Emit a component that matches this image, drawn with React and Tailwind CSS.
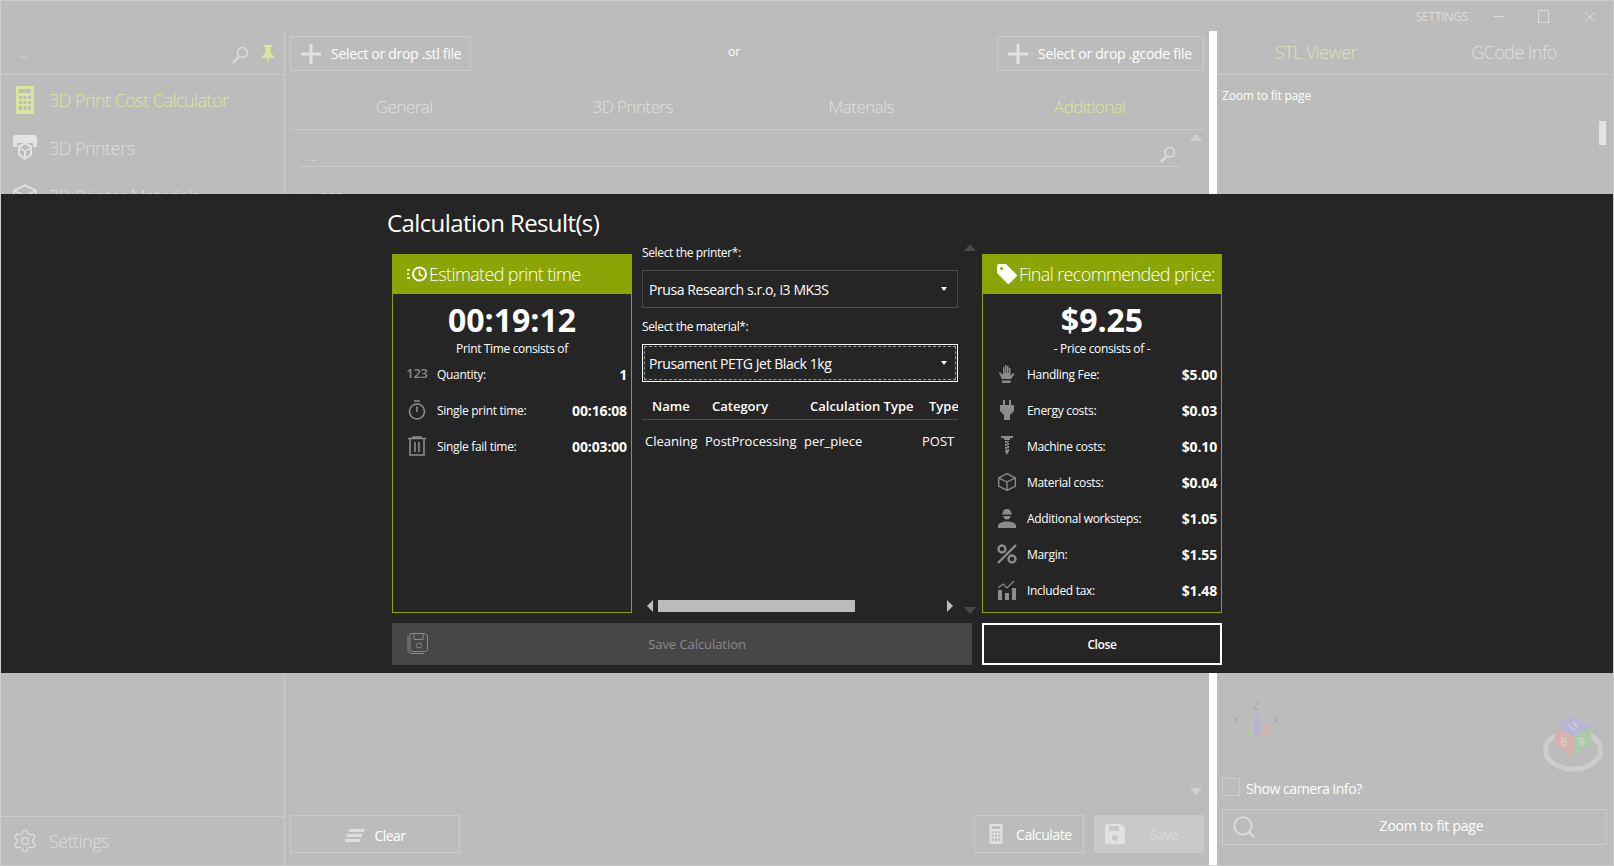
import React from "react";
import { Search, Settings } from "lucide-react";

const font = "font-['Open_Sans','Noto_Sans',sans-serif]";

const Up = ({ className }) => (
  <svg width="12" height="7" viewBox="0 0 12 7" className={className}>
    <path d="M0 7 6 0l6 7z" fill="currentColor" />
  </svg>
);

const CalcIcon = ({ size = 22, color = "#dde59a", height = 28 }) => (
  <svg width={size} height={height} viewBox="0 0 18 28">
    <path
      fillRule="evenodd"
      fill={color}
      d="M1 0h16a1 1 0 0 1 1 1v26a1 1 0 0 1-1 1H1a1 1 0 0 1-1-1V1a1 1 0 0 1 1-1zm2 3v4h12V3zm0 7v3h3v-3zm4.500 0v3h3v-3zm4.500 0v3h3v-3zM3 15v3h3v-3zm4.500 0v3h3v-3zm4.500 0v3h3v-3zM3 20v4h3v-4zm4.500 0v4h3v-4zm4.500 0v4h3v-4z"
    />
  </svg>
);

const PrinterIcon = () => (
  <svg width="26" height="26" viewBox="0 0 26 26" fill="#e4e4e4">
    <path d="M4 0h18a3 3 0 0 1 3 3v9h-4V8H5v4H1V3a3 3 0 0 1 3-3z" />
    <path d="M13 7l7 4v9l-7 5-7-5v-9z" />
    <path d="M13 9.500l5 3-5 3-5-3zM8 14l4 2.500V22l-4-3zM18 14l-4 2.500V22l4-3z" fill="#bcbcbc" />
  </svg>
);

const BoxIcon = ({ color, size = 24 }) => (
  <svg width={size} height={size} viewBox="0 0 24 24" fill="none" stroke={color} strokeWidth="1.600" strokeLinejoin="round">
    <path d="M12 2 22 7v10l-10 5-10-5V7z" />
    <path d="M2 7l10 5 10-5M12 12v10" />
  </svg>
);

const SearchFlip = ({ size = 18, color = "#dcdcdc" }) => (
  <svg width={size} height={size} viewBox="0 0 18 18" fill="none" stroke={color}>
    <circle cx="11.500" cy="6.500" r="5" strokeWidth="1.600" />
    <path d="M8 10.500 2 17" strokeWidth="2.400" />
  </svg>
);

const PlusIcon = () => (
  <svg width="20" height="20" viewBox="0 0 20 20" fill="#e2e2e2">
    <path d="M8.500 0h3v8.500H20v3h-8.500V20h-3v-8.500H0v-3h8.500z" />
  </svg>
);

const Pin = () => (
  <svg width="12" height="20" viewBox="0 0 12 20" fill="#dde59a">
    <path d="M2 0h8v2H8.500l.5 7 3 2v2H7l-1 7-1-7H0v-2l3-2 .5-7H2z" />
  </svg>
);

const ClockLines = () => (
  <svg width="20" height="16" viewBox="0 0 20 16" fill="none" stroke="#fff">
    <path d="M0 4h3M0 8h2M0 12h3" strokeWidth="1.500" />
    <circle cx="12.500" cy="8" r="6.500" strokeWidth="2" />
    <path d="M12.500 4v4.500l3 1.500" strokeWidth="1.500" />
  </svg>
);

const Tag = () => (
  <svg width="20" height="20" viewBox="0 0 20 20">
    <path
      fillRule="evenodd"
      fill="#fff"
      d="M2 0h7l10.500 10.500a1.500 1.500 0 0 1 0 2l-7 7a1.500 1.500 0 0 1-2 0L0 9V2a2 2 0 0 1 2-2zm2.500 3A1.500 1.500 0 1 0 4.500 6 1.500 1.500 0 0 0 4.500 3z"
    />
  </svg>
);

const g = "#8c8c8c";

const Stopwatch = () => (
  <svg width="18" height="20" viewBox="0 0 18 20" fill="none" stroke={g} strokeWidth="1.600">
    <circle cx="9" cy="11.500" r="7.500" />
    <path d="M6 1h6M9 6.500V12" />
  </svg>
);

const Trash = () => (
  <svg width="18" height="20" viewBox="0 0 18 20" fill="none" stroke={g} strokeWidth="1.600">
    <path d="M0 2.500h18M5 2.500V1h8v1.500M2 3v16h14V3M7 6v10M11 6v10" />
  </svg>
);

const Glove = () => (
  <svg width="18" height="19" viewBox="0 0 18 19" fill={g}>
    <path d="M4 14 1 8l1-1 3 3V2h1.500v6H7V0h1.500v8H9V1h1.500v7h.5V3h1.500v8l2.500-3 1.500 1-3.500 5z" />
    <rect x="4" y="15.500" width="8.500" height="2.500" />
  </svg>
);

const Plug = () => (
  <svg width="16" height="20" viewBox="0 0 16 20" fill={g}>
    <path d="M4 0h2v5h4V0h2v5h3v6l-4 4v5H5v-5l-4-4V5h3z" />
  </svg>
);

const Screw = () => (
  <svg width="14" height="20" viewBox="0 0 14 20" fill="none" stroke={g}>
    <path d="M1 1h12M4 3h6" strokeWidth="2" />
    <path d="M5 5h4v10l-2 4-2-4z" fill={g} strokeWidth="0" />
    <path d="M4 8l6-2M4 11l6-2M4 14l6-2" stroke="#252525" strokeWidth="1" />
  </svg>
);

const Worker = () => (
  <svg width="18" height="20" viewBox="0 0 18 20" fill={g}>
    <path d="M5 5a4 4 0 0 1 8 0h1v1.500H4V5z" />
    <path d="M5.500 8h7a3.500 3.500 0 0 1-7 0z" />
    <path d="M0 20v-2c0-3 4-4.500 9-4.500s9 1.500 9 4.500v2z" />
  </svg>
);

const PercentIcon = () => (
  <svg width="20" height="20" viewBox="0 0 20 20" fill="none" stroke={g} strokeWidth="2.400">
    <circle cx="5" cy="5" r="3.500" />
    <circle cx="15" cy="15" r="3.500" />
    <path d="M1 19 19 1" />
  </svg>
);

const Chart = () => (
  <svg width="18" height="20" viewBox="0 0 18 20" fill={g}>
    <rect x="0" y="10" width="4" height="10" />
    <rect x="7" y="13" width="4" height="7" />
    <rect x="14" y="8" width="4" height="12" />
    <path d="M0 8l5-4 4 4 7-7" fill="none" stroke={g} strokeWidth="1.200" />
  </svg>
);

const Floppy = () => (
  <svg width="22" height="22" viewBox="0 0 22 22" fill="none" stroke="#8a8a8a">
    <path d="M3 1.500h15l2.500 2.500v14l-2 1.500H5L3 18z" />
    <path d="M1 4v15l2.500 2.500H17" />
    <path d="M7 1.500v6h9v-6" />
    <circle cx="12" cy="13.500" r="2.500" />
  </svg>
);

const FloppyFill = () => (
  <svg width="20" height="20" viewBox="0 0 20 20">
    <path
      fillRule="evenodd"
      fill="#e2e2e2"
      d="M2 0h13l5 4v14a2 2 0 0 1-2 2H2a2 2 0 0 1-2-2V2a2 2 0 0 1 2-2zm2 2v5h10V2zm6 9a3 3 0 1 0 0 6 3 3 0 0 0 0-6z"
    />
  </svg>
);

const ClearIcon = () => (
  <svg width="20" height="13" viewBox="0 0 20 13" fill="#dedede">
    <path d="M4 0h16l-1 3H4zM2 5h15v3H2zM0 10h15v3H0z" />
  </svg>
);

const Axes = () => (
  <svg width="52" height="46" viewBox="-2 -6 52 46">
    <text x="20" y="10" fontSize="11" fill="#a8a8a8" fontFamily="Open Sans">Z</text>
    <text x="0" y="24" fontSize="11" fill="#a8a8a8" fontFamily="Open Sans">Y</text>
    <text x="40" y="24" fontSize="11" fill="#a8a8a8" fontFamily="Open Sans">X</text>
    <path d="M24 12l3 10v12l-3 3-3-3V22z" fill="#b3b5d6" />
    <path d="M7 25l7 1 8 10-3 1z" fill="#aecbaa" />
    <path d="M41 25l-7 1-8 10 3 1z" fill="#d3b0ac" />
  </svg>
);

const Cube = () => (
  <svg width="62" height="56" viewBox="0 0 62 56">
    <ellipse cx="31" cy="34" rx="27.500" ry="19" fill="none" stroke="#cdcdcd" strokeWidth="5" />
    <path d="M31 0l18 11-18 9-18-9z" fill="#b5b5d6" />
    <path d="M13 11l18 9v20l-18-12z" fill="#d6b1ad" />
    <path d="M49 11 31 20v20l18-12z" fill="#acc9aa" />
    <text x="27" y="14" fontSize="11" fill="#d8d8d8" fontFamily="Open Sans" transform="rotate(-35 31 10)">U</text>
    <text x="18" y="30" fontSize="11" fill="#d8d8d8" fontFamily="Open Sans">B</text>
    <text x="36" y="30" fontSize="11" fill="#d8d8d8" fontFamily="Open Sans">R</text>
  </svg>
);

const NavItem = ({ icon, label, active }) => (
  <div className="flex h-[48px] shrink-0 items-center">
    <div className="flex w-[48px] justify-center">{icon}</div>
    <span className={`text-[18px] font-light tracking-[-0.03em] ${active ? "text-[#dde59a]" : "text-[#dcdcdc]"}`}>
      {label}
    </span>
  </div>
);

const GhostButton = ({ className, children }) => (
  <div className={`flex items-center border border-[#cbcbcb] ${className}`}>{children}</div>
);

const Row = ({ icon, label, value }) => (
  <div className="flex h-9 items-center pl-[14px] pr-1">
    <div className="flex w-5 justify-center">{icon}</div>
    <span className="ml-[10px] flex-1 pt-[2px] text-[12px] tracking-[-0.025em] text-white">{label}</span>
    <span className="text-[14px] font-bold tracking-[-0.01em] text-white">{value}</span>
  </div>
);

const Card = ({ icon, title, value, subtitle, children }) => (
  <div className="mt-[10px] flex h-[359px] w-[240px] flex-col border border-[#8ba506]">
    <div className="-mx-px -mt-px flex h-[40px] shrink-0 items-center gap-[2px] bg-[#8ba506] pl-[15px]">
      {icon}
      <span className="text-[18px] font-light tracking-[-0.035em] text-white">{title}</span>
    </div>
    <div className="h-[46px] pt-[5px] text-center text-[32px] leading-[41px] font-bold tracking-[0] text-white">
      {value}
    </div>
    <div className="h-4 text-center text-[12px] leading-[18px] tracking-[-0.03em] text-white">{subtitle}</div>
    {children}
  </div>
);

const SelectBox = ({ children }) => (
  <div className="mt-2 flex h-[38px] items-center justify-between border border-[#4a4a4a] px-[6px] text-[14px] tracking-[-0.03em] text-white">
    {children}
    <span className="mr-1 h-0 w-0 border-x-[3px] border-t-[4px] border-x-transparent border-t-white" />
  </div>
);

export default function App() {
  return (
    <div className={`relative flex h-[866px] w-[1614px] flex-col overflow-hidden border border-[#cdcdcd] bg-[#bcbcbc] ${font}`}>
      {/* title bar */}
      <div className="flex h-[30px] shrink-0 items-center justify-end pt-[1px] text-[#dcdcdc]">
        <span className="text-[12px] tracking-[-0.02em]">SETTINGS</span>
        <span className="ml-[26px] h-px w-[10px] bg-[#dcdcdc]" />
        <span className="ml-[34px] h-[13px] w-[11px] border border-[#dcdcdc]" />
        <svg width="12" height="12" viewBox="0 0 12 12" className="ml-[35px] mr-[17px]" stroke="#dcdcdc" fill="none">
          <path d="M1 1l10 10M11 1 1 11" />
        </svg>
      </div>

      <div className="flex min-h-0 flex-1">
        {/* sidebar */}
        <div className="flex w-[284px] shrink-0 flex-col border-r border-[#cbcbcb]">
          <div className="flex h-[44px] shrink-0 items-center border-b border-[#cbcbcb] pl-[18px] pr-[10px] pt-[4px]">
            <span className="flex-1 text-[11px] text-[#e0e0e0]">...</span>
            <SearchFlip />
            <div className="ml-[13px]">
              <Pin />
            </div>
          </div>
          <div className="flex flex-col pt-[1px]">
            <NavItem active icon={<CalcIcon size={18} />} label="3D Print Cost Calculator" />
            <NavItem icon={<PrinterIcon />} label="3D Printers" />
            <NavItem icon={<BoxIcon color="#e4e4e4" size={26} />} label="3D Printer Materials" />
          </div>
          <div className="mt-auto flex h-[49px] items-center border-t border-[#cbcbcb]">
            <div className="flex w-[48px] justify-center">
              <Settings size={26} color="#dcdcdc" strokeWidth={1.200} />
            </div>
            <span className="text-[18px] font-light tracking-[-0.03em] text-[#dcdcdc]">Settings</span>
          </div>
        </div>

        {/* center panel */}
        <div className="relative flex w-[924px] shrink-0 flex-col px-[5px] pb-[12px] pt-[5px]">
          <div className="flex h-[35px] shrink-0 items-center justify-between">
            <GhostButton className="h-[35px] w-[181px] pl-[10px]">
              <PlusIcon />
              <span className="ml-[10px] text-[14px] tracking-[-0.02em] text-white">Select or drop .stl file</span>
            </GhostButton>
            <span className="mb-[3px] text-[12px] text-white">or</span>
            <GhostButton className="h-[35px] w-[207px] pl-[10px]">
              <PlusIcon />
              <span className="ml-[10px] text-[14px] tracking-[-0.02em] text-white">Select or drop .gcode file</span>
            </GhostButton>
          </div>
          <div className="grid h-[59px] shrink-0 grid-cols-4 items-center border-b border-[#cbcbcb] pt-[14px] text-center text-[17px] font-light tracking-[-0.03em] text-[#e0e0e0]">
            <span>General</span>
            <span>3D Printers</span>
            <span>Materials</span>
            <span className="text-[#dde59a]">Additional</span>
          </div>
          <div className="ml-[10px] mr-[24px] flex h-[37px] shrink-0 items-end justify-between border-b border-[#cbcbcb] text-[11px] text-[#e0e0e0]">
            <span className="ml-[8px] pb-[1px]">...</span>
            <div className="mb-[3px] mr-[4px]">
              <SearchFlip size={17} />
            </div>
          </div>
          <div className="ml-[9px] mt-[22px] flex items-center gap-[12px] text-[12px] text-[#d6d6d6]">
            <span>⌃</span>
            <span>PPE</span>
          </div>
          <Up className="absolute right-[7px] top-[103px] text-[#d0d0d0]" />
          <Up className="absolute bottom-[70px] right-[7px] rotate-180 text-[#d0d0d0]" />
          <div className="mt-auto flex h-[38px] shrink-0 items-stretch">
            <GhostButton className="w-[170px] justify-center pt-[3px]">
              <ClearIcon />
              <span className="ml-[10px] text-[14px] tracking-[-0.04em] text-white">Clear</span>
            </GhostButton>
            <GhostButton className="ml-auto w-[110px] pl-[14px]">
              <CalcIcon size={14} height={20} color="#e2e2e2" />
              <span className="ml-[13px] text-[14px] tracking-[-0.03em] text-white">Calculate</span>
            </GhostButton>
            <div className="ml-[10px] flex w-[110px] items-center bg-[#c9c9c9] pl-[11px]">
              <FloppyFill />
              <span className="ml-[25px] text-[14px] tracking-[-0.04em] text-[#d8d8d8]">Save</span>
            </div>
          </div>
        </div>

        <div className="w-2 shrink-0 bg-white" />

        {/* viewer panel */}
        <div className="relative flex min-w-0 flex-1 flex-col">
          <div className="grid h-[44px] shrink-0 grid-cols-2 items-center border-b border-[#cbcbcb] text-center text-[18px] font-light tracking-[-0.03em] text-[#e0e0e0]">
            <span className="text-[#dde2b0]">STL Viewer</span>
            <span>GCode Info</span>
          </div>
          <div className="ml-[5px] mt-[12px] text-[12px] tracking-[-0.015em] text-white">Zoom to fit page</div>
          <div className="absolute right-[7px] top-[90px] h-[24px] w-[7px] bg-[#e2e2e2]" />
          <div className="absolute left-[14px] top-[663px]">
            <Axes />
          </div>
          <div className="absolute right-[9px] top-[685px]">
            <Cube />
          </div>
          <div className="ml-[5px] mt-auto flex items-center">
            <span className="h-[18px] w-[18px] border border-[#cbcbcb]" />
            <span className="ml-[6px] pt-[4px] text-[14px] tracking-[-0.03em] text-white">Show camera info?</span>
          </div>
          <GhostButton className="mb-[20px] ml-[5px] mr-[6px] mt-[10px] h-[36px] pl-[8px]">
            <Search size={26} color="#dcdcdc" strokeWidth={1.800} />
            <span className="flex-1 pb-[3px] text-center text-[14px] tracking-[-0.015em] text-white">Zoom to fit page</span>
          </GhostButton>
        </div>
      </div>

      {/* result dialog */}
      <div className="absolute inset-x-0 top-[193px] flex h-[479px] flex-col bg-[#252525] pl-[391px]">
        <div className="flex h-[50px] shrink-0 items-center pt-[8px]">
          <span className="-ml-[5px] text-[24px] tracking-[-0.025em] text-white">Calculation Result(s)</span>
        </div>
        <div className="flex h-[369px] shrink-0 gap-[10px]">
          <Card icon={<ClockLines />} title="Estimated print time" value="00:19:12" subtitle="Print Time consists of">
            <Row
              icon={<span className="text-[13px] font-semibold tracking-[-0.02em] text-[#8c8c8c]">123</span>}
              label="Quantity:"
              value="1"
            />
            <Row icon={<Stopwatch />} label="Single print time:" value="00:16:08" />
            <Row icon={<Trash />} label="Single fail time:" value="00:03:00" />
          </Card>

          <div className="relative flex w-[330px] flex-col pb-px pr-[14px]">
            <div className="h-[18px] text-[12px] leading-[18px] tracking-[-0.03em] text-white">Select the printer*:</div>
            <SelectBox>Prusa Research s.r.o, i3 MK3S</SelectBox>
            <div className="mt-[10px] h-[18px] text-[12px] leading-[18px] tracking-[-0.03em] text-white">Select the material*:</div>
            <div className="mt-2 h-[38px] border border-white p-px">
              <div className="flex h-full items-center justify-between border border-dashed border-[#9a9a9a] px-[4px] text-[14px] tracking-[-0.03em] text-white">
                Prusament PETG Jet Black 1kg
                <span className="mr-1 h-0 w-0 border-x-[3px] border-t-[4px] border-x-transparent border-t-white" />
              </div>
            </div>
            <div className="mt-[12px] grid h-[26px] grid-cols-[63px_99px_119px_35px] items-center overflow-hidden border-b border-[#4a4a4a] text-[13px] font-semibold whitespace-nowrap text-white">
              <span className="pl-[10px]">Name</span>
              <span className="pl-[7px]">Category</span>
              <span className="pl-[6px]">Calculation Type</span>
              <span className="pl-[6px]">Type</span>
            </div>
            <div className="grid h-[41px] grid-cols-[63px_99px_118px_36px] items-center pt-[2px] text-[13px] whitespace-nowrap text-white">
              <span className="pl-[3px]">Cleaning</span>
              <span>PostProcessing</span>
              <span>per_piece</span>
              <span>POST</span>
            </div>
            <div className="mt-auto flex h-[12px] items-center">
              <span className="ml-[5px] h-0 w-0 border-y-[6px] border-r-[6px] border-y-transparent border-r-[#bcbcbc]" />
              <span className="ml-[5px] h-full w-[197px] bg-[#bcbcbc]" />
              <span className="ml-[92px] h-0 w-0 border-y-[6px] border-l-[6px] border-y-transparent border-l-[#bcbcbc]" />
            </div>
            <Up className="absolute -right-[4px] top-0 text-[#4a4a4a]" />
            <Up className="absolute -bottom-px -right-[4px] rotate-180 text-[#4a4a4a]" />
          </div>

          <Card icon={<Tag />} title="Final recommended price:" value="$9.25" subtitle="- Price consists of -">
            <Row icon={<Glove />} label="Handling Fee:" value="$5.00" />
            <Row icon={<Plug />} label="Energy costs:" value="$0.03" />
            <Row icon={<Screw />} label="Machine costs:" value="$0.10" />
            <Row icon={<BoxIcon color={g} size={20} />} label="Material costs:" value="$0.04" />
            <Row icon={<Worker />} label="Additional worksteps:" value="$1.05" />
            <Row icon={<PercentIcon />} label="Margin:" value="$1.55" />
            <Row icon={<Chart />} label="Included tax:" value="$1.48" />
          </Card>
        </div>
        <div className="mt-[10px] flex h-[42px] shrink-0 gap-[10px]">
          <div className="relative flex w-[580px] items-center justify-center bg-[#474747] pl-[30px] pt-[2px] text-[13px] tracking-[-0.005em] text-[#8a8a8a]">
            <div className="absolute left-[15px] top-[9px]">
              <Floppy />
            </div>
            Save Calculation
          </div>
          <div className="flex w-[240px] items-center justify-center border-2 border-white bg-[#252525] pt-[2px] text-[12px] font-semibold tracking-[-0.03em] text-white">
            Close
          </div>
        </div>
      </div>
    </div>
  );
}
